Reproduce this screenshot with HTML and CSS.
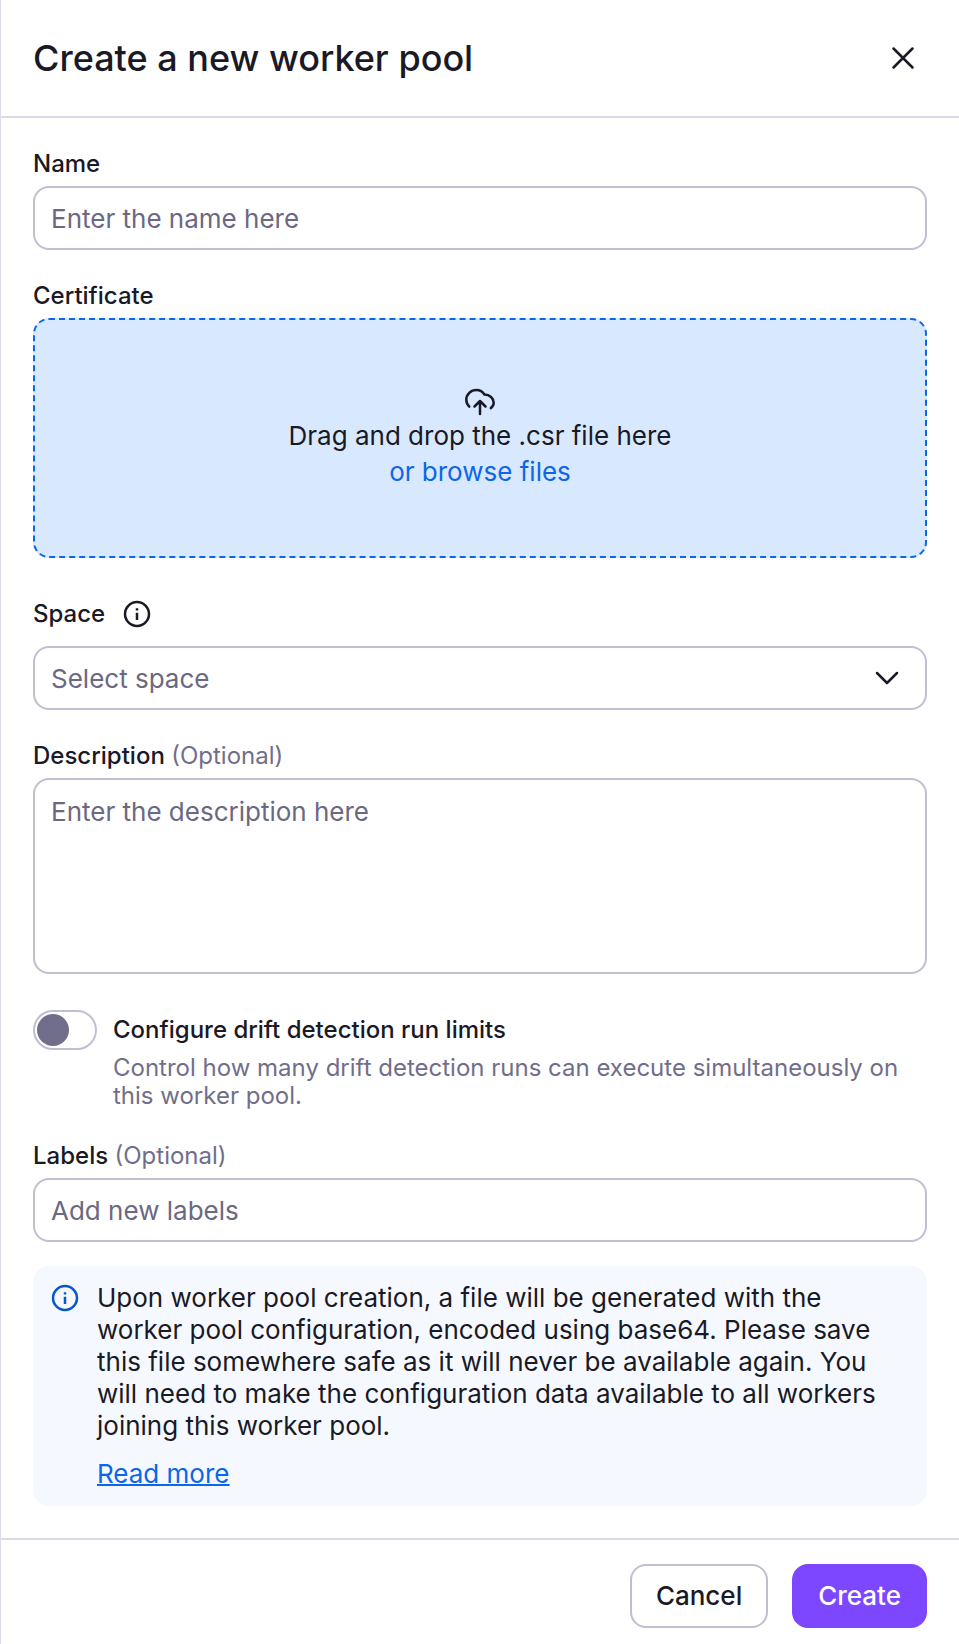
FILE: index.html
```html
<!DOCTYPE html>
<html lang="en">
<head>
    <meta charset="UTF-8">
    <meta name="viewport" content="width=device-width, initial-scale=1.0">
    <title>Create a new worker pool</title>
    <link rel="stylesheet" href="styles.css">
</head>
<body>
    <div class="drawer">
        <header class="drawer-header">
            <h1>Create a new worker pool</h1>
            <button type="button" class="close-button" aria-label="Close">
                <svg class="icon" viewBox="0 0 32 32">
                    <path d="M6.500 6.500l19 19M25.500 6.500l-19 19"/>
                </svg>
            </button>
        </header>

        <form class="drawer-body">
            <div class="form-group">
                <label for="name">Name</label>
                <input type="text" id="name" class="field" placeholder="Enter the name here">
            </div>

            <div class="form-group">
                <label>Certificate</label>
                <div class="dropzone">
                    <svg class="icon" viewBox="0 0 32 32">
                        <path d="M5.300 20.600C3.400 18.800 2.300 16.500 2.300 13.800 2.300 8.200 6.900 4 12.300 4c3.600 0 6.500 1.700 8.200 4.600 5.200 0 9.200 3.700 9.200 8.200 0 2.100-1 4-2.900 5.300"/>
                        <path d="M16 28V16M10.500 20.500L16 15l5.500 5.500"/>
                    </svg>
                    <span>Drag and drop the .csr file here</span>
                    <a class="browse">or browse files</a>
                </div>
            </div>

            <div class="form-group">
                <div class="label-row">
                    <label for="space">Space</label>
                    <svg class="icon" viewBox="0 0 32 32">
                        <circle cx="16" cy="16" r="12"/>
                        <path class="info-mark" d="M16 14.700v7.200M16 10.200v2.400"/>
                    </svg>
                </div>
                <div class="field select" id="space">
                    <span>Select space</span>
                    <svg class="icon" viewBox="0 0 32 32">
                        <path d="M6 11l10 10 10-10"/>
                    </svg>
                </div>
            </div>

            <div class="form-group">
                <label for="description">Description <span class="optional">(Optional)</span></label>
                <textarea id="description" class="field" placeholder="Enter the description here"></textarea>
            </div>

            <div class="toggle-group">
                <div class="toggle"><div class="knob"></div></div>
                <div class="toggle-text">
                    <label>Configure drift detection run limits</label>
                    <p>Control how many drift detection runs can execute simultaneously on this worker pool.</p>
                </div>
            </div>

            <div class="form-group">
                <label for="labels">Labels <span class="optional">(Optional)</span></label>
                <input type="text" id="labels" class="field" placeholder="Add new labels">
            </div>

            <div class="notice">
                <svg class="icon" viewBox="0 0 32 32">
                    <circle cx="16" cy="16" r="12"/>
                    <path class="info-mark" d="M16 14.700v7.200M16 10.200v2.400"/>
                </svg>
                <div class="notice-text">
                    <p>Upon worker pool creation, a file will be generated with the worker pool configuration, encoded using base64. Please save this file somewhere safe as it will never be available again. You will need to make the configuration data available to all workers joining this worker pool.</p>
                    <a href="#">Read more</a>
                </div>
            </div>
        </form>

        <footer class="drawer-footer">
            <button type="button" class="button">Cancel</button>
            <button type="button" class="button primary">Create</button>
        </footer>
    </div>
</body>
</html>
```
FILE: styles.css
```css
* {
    box-sizing: border-box;
}

body {
    margin: 0;
    background: #fff;
    color: #1a1926;
    font-family: Inter, sans-serif;
    font-size: 26px;
    line-height: 32px;
}

p {
    margin: 0;
}

.drawer {
    height: 1644px;
    overflow: hidden;
    border-left: 1px solid #dcd9ea;
}

.drawer-header {
    display: flex;
    align-items: center;
    justify-content: space-between;
    height: 118px;
    padding: 0 40px 0 32px;
    border-bottom: 2px solid #dcd9ea;
}

.drawer-header h1 {
    margin: 0;
    font-size: 36px;
    font-weight: 500;
    line-height: 44px;
}

.close-button {
    display: flex;
    padding: 0;
    border: none;
    background: none;
    color: inherit;
}

.icon {
    flex: none;
    width: 32px;
    height: 32px;
    fill: none;
    stroke: currentColor;
    stroke-width: 2.5px;
    stroke-linecap: round;
    stroke-linejoin: round;
}

.info-mark {
    stroke-linecap: butt;
}

.drawer-body {
    padding: 32px;
}

.form-group {
    display: flex;
    flex-direction: column;
    gap: 8px;
    margin-bottom: 32px;
}

label {
    font-size: 24px;
    font-weight: 500;
    line-height: 28px;
}

.optional {
    color: #716e8b;
    font-weight: 400;
}

.label-row {
    display: flex;
    align-items: center;
    gap: 16px;
    height: 48px;
}

.field {
    width: 100%;
    height: 64px;
    padding: 0 16px;
    border: 2px solid #c1bed1;
    border-radius: 16px;
    background: #fff;
    color: #6b6883;
    font: inherit;
}

.field::placeholder {
    color: #6b6883;
    opacity: 1;
}

textarea.field {
    height: 196px;
    padding: 16px;
    resize: none;
}

.select {
    display: flex;
    align-items: center;
    justify-content: space-between;
    padding-right: 22px;
}

.select span {
    padding-top: 2px;
}

.select .icon {
    color: #1a1926;
}

.dropzone {
    display: flex;
    flex-direction: column;
    align-items: center;
    justify-content: center;
    height: 240px;
    border: 2px dashed #0c66e9;
    border-radius: 16px;
    background: #d8e8ff;
    line-height: 36px;
}

.browse {
    color: #0c66e9;
}

.toggle-group {
    display: flex;
    align-items: flex-start;
    gap: 16px;
    margin: 36px 0 32px;
}

.toggle {
    flex: none;
    width: 64px;
    height: 40px;
    padding: 2px;
    border: 2px solid #c1bed1;
    border-radius: 20px;
}

.knob {
    width: 32px;
    height: 32px;
    border-radius: 50%;
    background: #716e8b;
}

.toggle-text {
    display: flex;
    flex-direction: column;
    gap: 10px;
    padding-top: 6px;
}

.toggle-text p {
    color: #716e8b;
    font-size: 24px;
    line-height: 28px;
}

.notice {
    display: flex;
    gap: 16px;
    margin-top: -8px;
    padding: 16px;
    border-radius: 16px;
    background: #f5f9ff;
}

.notice .icon {
    color: #0755cf;
}

.notice-text {
    display: flex;
    flex-direction: column;
    align-items: flex-start;
    gap: 16px;
}

.notice-text a {
    color: #0c66e9;
    text-decoration-thickness: 2px;
}

.drawer-footer {
    display: flex;
    justify-content: flex-end;
    gap: 24px;
    padding: 24px 32px 16px;
    border-top: 2px solid #dcd9ea;
}

.button {
    height: 64px;
    padding: 0 24px;
    border: 2px solid #c1bed1;
    border-radius: 16px;
    background: #fff;
    color: inherit;
    font: inherit;
    font-weight: 500;
}

.button.primary {
    border-color: #7c47ff;
    background: #7c47ff;
    color: #fff;
}
```
